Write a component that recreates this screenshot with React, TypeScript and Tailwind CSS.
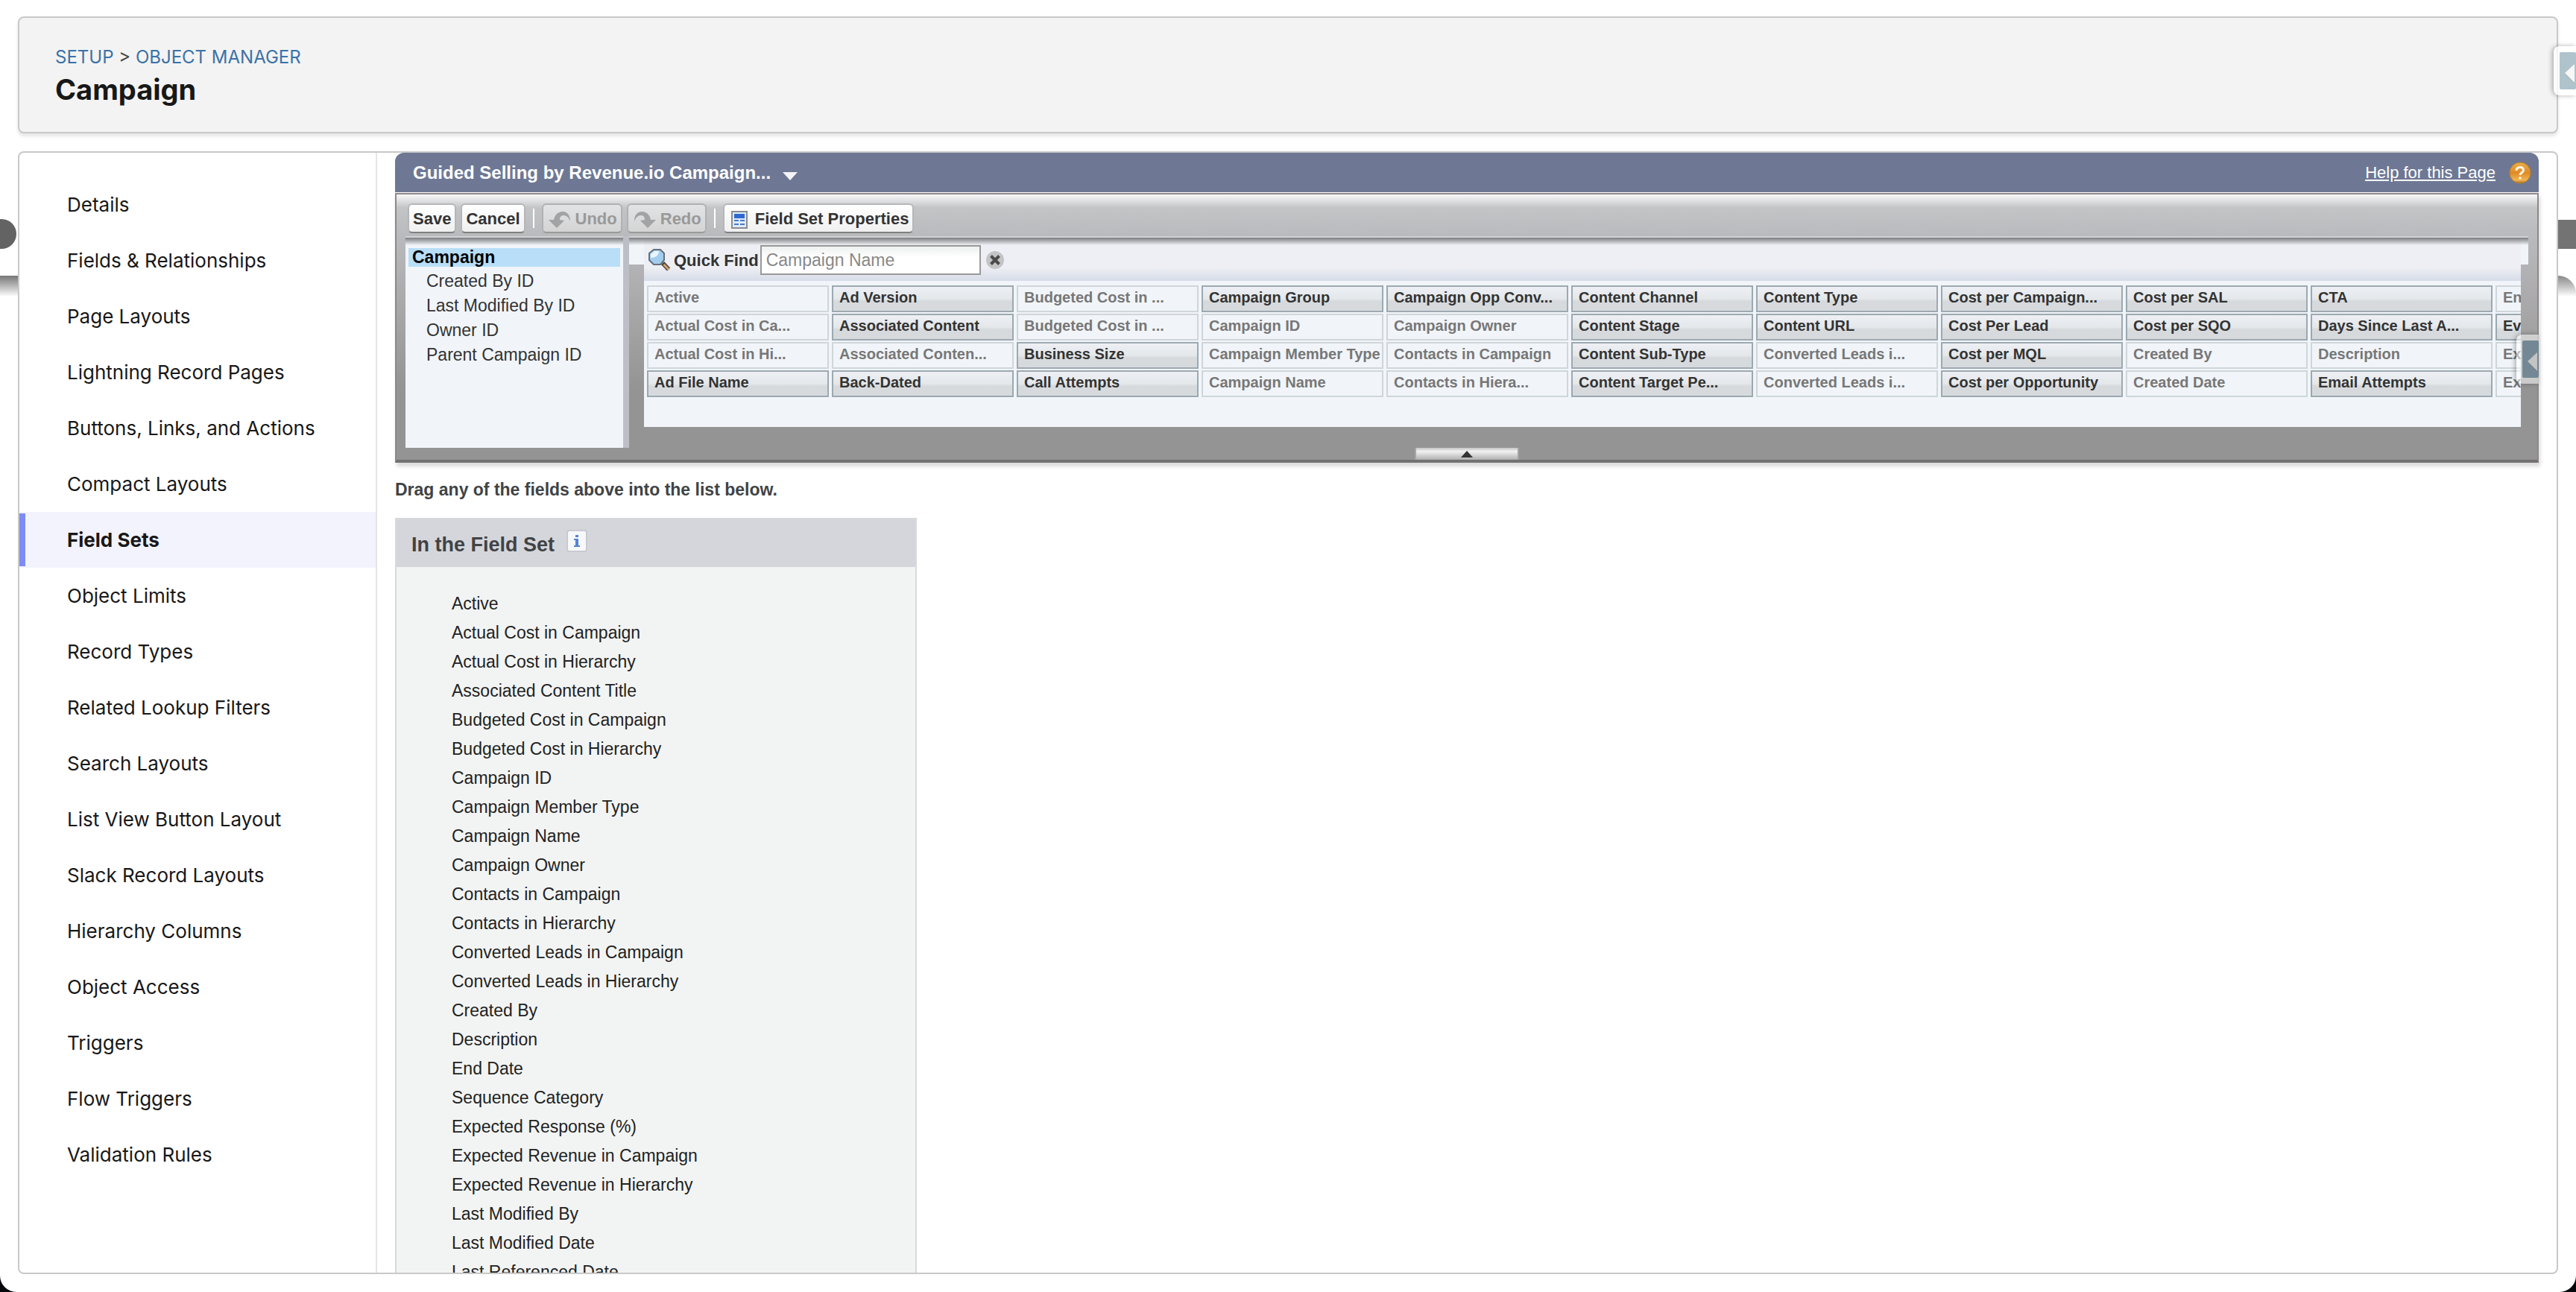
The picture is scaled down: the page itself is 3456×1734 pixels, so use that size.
import React from "react";

const NAV = [
  "Details",
  "Fields & Relationships",
  "Page Layouts",
  "Lightning Record Pages",
  "Buttons, Links, and Actions",
  "Compact Layouts",
  "Field Sets",
  "Object Limits",
  "Record Types",
  "Related Lookup Filters",
  "Search Layouts",
  "List View Button Layout",
  "Slack Record Layouts",
  "Hierarchy Columns",
  "Object Access",
  "Triggers",
  "Flow Triggers",
  "Validation Rules",
];

const TREE = ["Created By ID", "Last Modified By ID", "Owner ID", "Parent Campaign ID"];

type Cell = [label: string, used: boolean];

const COLUMNS: Cell[][] = [
  [["Active", true], ["Actual Cost in Ca...", true], ["Actual Cost in Hi...", true], ["Ad File Name", false]],
  [["Ad Version", false], ["Associated Content", false], ["Associated Conten...", true], ["Back-Dated", false]],
  [["Budgeted Cost in ...", true], ["Budgeted Cost in ...", true], ["Business Size", false], ["Call Attempts", false]],
  [["Campaign Group", false], ["Campaign ID", true], ["Campaign Member Type", true], ["Campaign Name", true]],
  [["Campaign Opp Conv...", false], ["Campaign Owner", true], ["Contacts in Campaign", true], ["Contacts in Hiera...", true]],
  [["Content Channel", false], ["Content Stage", false], ["Content Sub-Type", false], ["Content Target Pe...", false]],
  [["Content Type", false], ["Content URL", false], ["Converted Leads i...", true], ["Converted Leads i...", true]],
  [["Cost per Campaign...", false], ["Cost Per Lead", false], ["Cost per MQL", false], ["Cost per Opportunity", false]],
  [["Cost per SAL", false], ["Cost per SQO", false], ["Created By", true], ["Created Date", true]],
  [["CTA", false], ["Days Since Last A...", false], ["Description", true], ["Email Attempts", false]],
  [["End Date", true], ["Event Date", false], ["Expected Respon...", true], ["Expected Reven...", true]],
];

const FIELDS = [
  "Active",
  "Actual Cost in Campaign",
  "Actual Cost in Hierarchy",
  "Associated Content Title",
  "Budgeted Cost in Campaign",
  "Budgeted Cost in Hierarchy",
  "Campaign ID",
  "Campaign Member Type",
  "Campaign Name",
  "Campaign Owner",
  "Contacts in Campaign",
  "Contacts in Hierarchy",
  "Converted Leads in Campaign",
  "Converted Leads in Hierarchy",
  "Created By",
  "Description",
  "End Date",
  "Sequence Category",
  "Expected Response (%)",
  "Expected Revenue in Campaign",
  "Expected Revenue in Hierarchy",
  "Last Modified By",
  "Last Modified Date",
  "Last Referenced Date",
];

function TurnArrow({ flip = false }: { flip?: boolean }) {
  return (
    <svg
      viewBox="0 0 30 24"
      className={flip ? "mt-1 ml-[2px] h-6 w-[30px] -scale-x-100" : "mt-1 ml-[2px] h-6 w-[30px]"}
      aria-hidden="true"
    >
      <path d="M29 14C29 6 25 1 19 1C12 1 8 6 7 12H0L11 23L21 13L15 12C15 8 17 6 20 6C24 6 27 9 29 14Z" fill="#a2a3a5" />
    </svg>
  );
}

function SheetIcon() {
  return (
    <svg viewBox="0 0 22 24" className="h-6 w-[22px]" aria-hidden="true">
      <rect x="1" y="1" width="20" height="22" fill="#dcebfa" stroke="#8b8d90" strokeWidth="2" />
      <rect x="4" y="4" width="14" height="6" fill="#2f69cf" />
      <path d="M4 12h6v2H4zM12 12h6v2h-6zM4 17h6v2H4zM12 17h6v2h-6z" fill="#4a79c8" />
    </svg>
  );
}

function Magnifier() {
  return (
    <svg viewBox="0 0 32 32" className="size-8" aria-hidden="true">
      <path d="M20 20l8 8.500" stroke="#55483e" strokeWidth="6" />
      <path d="M21.500 22l7 7" stroke="#d3a878" strokeWidth="2.500" />
      <path d="M8 2h9l5 5v9l-5 6H8l-6-6V7z" fill="#a3cdee" stroke="#65717c" strokeWidth="2" />
      <path d="M4 13V8l5-4h6c0 5-4 9-11 9z" fill="#e9f5fd" />
    </svg>
  );
}

function ClearIcon() {
  return (
    <svg viewBox="0 0 24 24" className="size-6" aria-hidden="true">
      <circle cx="12" cy="12" r="12" fill="#c3c4c6" />
      <path d="M6.500 6.500l11 11M17.500 6.500l-11 11" stroke="#4a4a4a" strokeWidth="4" />
    </svg>
  );
}

function HelpIcon() {
  return (
    <svg viewBox="0 0 30 30" className="size-[30px]" aria-hidden="true">
      <defs>
        <linearGradient id="helpFill" x1="0" y1="0" x2="0" y2="1">
          <stop offset="0" stopColor="#eab04e" />
          <stop offset="0.5" stopColor="#df8a26" />
          <stop offset="0.85" stopColor="#efb552" />
          <stop offset="1" stopColor="#a8681c" />
        </linearGradient>
      </defs>
      <circle cx="15" cy="15" r="14" fill="url(#helpFill)" stroke="#c07f22" />
      <path
        d="M10 12c0-3 2-4.500 5-4.500s4.500 1.500 4.500 4c0 3-4.500 3-4.500 6.500"
        fill="none"
        stroke="#fdf3df"
        strokeWidth="3"
      />
      <rect x="13.500" y="20.500" width="3" height="3" fill="#fdf3df" />
    </svg>
  );
}

function SideTab({ dim = false }: { dim?: boolean }) {
  return (
    <button
      type="button"
      aria-label="Expand panel"
      className={
        dim
          ? "flex h-[66px] w-[30px] items-center justify-end rounded-l-lg bg-white/50 shadow-[-2px_0_6px_rgba(0,0,0,0.3)]"
          : "flex h-[66px] w-[30px] items-center justify-end rounded-l-lg bg-white/80 shadow-[-2px_0_6px_rgba(0,0,0,0.3)]"
      }
    >
      <svg viewBox="0 0 22 50" className="h-[50px] w-[22px]" aria-hidden="true">
        <rect width="22" height="50" rx="2" fill={dim ? "#738894" : "#afc3cc"} />
        <path d="M20 17v25L7 29z" fill="#000" opacity="0.12" />
        <path d="M20 16v25L7 28z" fill={dim ? "#c4c4c4" : "#f7f7f7"} />
      </svg>
    </button>
  );
}

const BTN =
  "flex h-10 items-center whitespace-nowrap rounded-md border-2 border-[#b5b6b8] border-b-[#7f7f7f] bg-linear-to-b from-white to-[#f0f0f0] px-[5px] text-[22px] font-bold text-[#333]";
const BTN_OFF =
  "flex h-10 items-center gap-[6px] whitespace-nowrap rounded-md border-2 border-[#b0b1b3] border-b-[#999] bg-linear-to-b from-[#e2e3e4] to-[#d4d4d5] px-[5px] text-[22px] font-bold text-[#999]";

function Toolbar() {
  return (
    <div className="flex h-14 items-center gap-[6px] pt-3 pb-1 pl-[15px]">
      <button type="button" className={BTN}>Save</button>
      <button type="button" className={BTN}>Cancel</button>
      <span className="mx-1 h-[26px] w-[2px] bg-white" />
      <button type="button" disabled className={BTN_OFF}>
        <TurnArrow />
        Undo
      </button>
      <button type="button" disabled className={BTN_OFF}>
        <TurnArrow flip />
        Redo
      </button>
      <span className="mx-1 h-[26px] w-[2px] bg-white" />
      <button type="button" className={BTN}>
        <span className="mt-1 mr-[10px] ml-1 flex">
          <SheetIcon />
        </span>
        Field Set Properties
      </button>
    </div>
  );
}

function Palette() {
  return (
    <div className="relative min-w-0 flex-1 pr-3">
      <div className="absolute top-0 right-3 left-0 h-[38px] bg-[#f1f5f9]" />
      <div className="absolute top-0 right-3 left-0 z-10 h-3 border-t-2 border-[#d0d1d3] bg-linear-to-b from-[#7c7d80] to-transparent" />
      <div className="relative mr-[10px] ml-5 overflow-hidden bg-[#f1f5f9]">
        <div className="flex h-[60px] items-center bg-linear-to-b from-[#eeeff4] from-70% to-[#d6dce9] pt-3 pb-2 pl-[5px]">
          <Magnifier />
          <label htmlFor="quick-find" className="ml-[3px] text-[22px] font-bold text-[#333]">
            Quick Find
          </label>
          <input
            id="quick-find"
            type="text"
            placeholder="Campaign Name"
            className="ml-[2px] h-10 w-[296px] border-2 border-[#999] bg-linear-to-b from-[#eef1f1] to-white to-40% px-[6px] text-[23px] text-[#333] placeholder:text-[#888]"
          />
          <button type="button" aria-label="Clear" className="ml-[7px]">
            <ClearIcon />
          </button>
        </div>
        <div className="flex h-[196px] gap-1 px-1 pt-[6px]">
          {COLUMNS.map((column, c) => (
            <div key={c} className="flex w-[244px] shrink-0 flex-col gap-[2px]">
              {column.map(([label, used], r) => (
                <div
                  key={r}
                  className={
                    used
                      ? "h-9 border-2 border-[#cfd6da] pl-2 text-[20px]/[28px] font-bold whitespace-nowrap text-[#777]"
                      : "h-9 border-2 border-[#9ca9b0] bg-linear-to-b from-[#edeff4] from-0% via-[#e4e8ea] via-50% to-[#d7dadd] to-60% pl-2 text-[20px]/[28px] font-bold whitespace-nowrap text-[#333]"
                  }
                >
                  {label}
                </div>
              ))}
            </div>
          ))}
        </div>
      </div>
      <div className="absolute top-[132px] -right-[2px] z-20">
        <SideTab dim />
      </div>
    </div>
  );
}

function Editor() {
  return (
    <section>
      <header className="flex h-[53px] items-center rounded-t-xl bg-[#6e7894] pr-[10px] pl-6 text-white">
        <h2 className="text-[24px] font-bold">Guided Selling by Revenue.io Campaign...</h2>
        <button type="button" aria-label="Choose field set" className="mt-[10px] ml-4">
          <svg viewBox="0 0 20 11" className="h-[11px] w-5" aria-hidden="true">
            <path d="M0 0h20L10 11z" fill="#f4f4f6" />
          </svg>
        </button>
        <a href="#help" className="ml-auto text-[22px] underline">Help for this Page</a>
        <a href="#help" aria-label="Help" className="ml-[18px]">
          <HelpIcon />
        </a>
      </header>
      <div className="relative mt-px border-2 border-b-4 border-[#8f888a] border-b-[#737171] bg-[linear-gradient(to_bottom,#f8f8f9_0px,#c3c4c6_18px,#b9babd_56px,#b0b0b2_110px,#949494_260px)] shadow-[2px_5px_5px_rgba(0,0,0,0.15)]">
        <Toolbar />
        <div className="flex h-[300px] pl-3">
          <div className="h-[284px] w-[292px] shrink-0 bg-[#f1f5f9] text-[23px]/[33px]">
            <div className="h-3 border-t-2 border-[#d0d1d3] bg-linear-to-b from-[#7c7d80] to-[#f1f5f9]" />
            <div className="mx-1 mt-1 h-[25px] bg-[#b8def8] pl-[5px] text-[23px]/[25px] font-bold text-black">
              Campaign
            </div>
            <ul className="mt-[3px]">
              {TREE.map((item) => (
                <li key={item} className="pl-7 text-[#333]">{item}</li>
              ))}
            </ul>
          </div>
          <div className="h-[284px] w-2 shrink-0 bg-[#bdbfc6]" />
          <Palette />
        </div>
        <button
          type="button"
          aria-label="Collapse palette"
          className="absolute bottom-0 left-1/2 flex h-4 w-[140px] -translate-x-1/2 items-center justify-center border-x-2 border-[#a5a5a5] bg-linear-to-b from-[#c4c4c4] via-[#f2f2f2] via-30% to-[#b0b0b0]"
        >
          <svg viewBox="0 0 16 9" className="h-[9px] w-4" aria-hidden="true">
            <path d="M8 0l8 9H0z" fill="#333" />
          </svg>
        </button>
      </div>
    </section>
  );
}

function FieldSet() {
  return (
    <section className="mt-6 w-[700px] border-2 border-[#d4dadc] bg-[#f2f4f3]">
      <header className="flex h-16 items-center gap-4 bg-[#d5d6db] pl-5">
        <h3 className="pt-1 text-[27px] font-bold text-[#404345]">In the Field Set</h3>
        <span className="mb-[6px] flex h-[30px] w-7 items-center justify-center rounded-sm border-2 border-[#c9cacd] bg-[#f6f8fb]">
          <svg viewBox="0 0 8 16" className="h-4 w-2" aria-label="Information">
            <path d="M2 0h4v3H2zM0 5h6v9h2v2H0v-2h2V7H0z" fill="#5583d6" />
          </svg>
        </span>
      </header>
      <ul className="pt-[30px] pb-10 pl-[74px] text-[23px]/[39px] text-[#222]">
        {FIELDS.map((field) => (
          <li key={field}>{field}</li>
        ))}
      </ul>
    </section>
  );
}

export default function App() {
  return (
    <div className="h-screen bg-[#05070c]">
      <div className="relative flex h-full flex-col gap-6 overflow-hidden rounded-b-[22px] bg-white px-6 pt-[22px] pb-6 font-['Liberation_Sans',Arial,sans-serif]">
        <div className="absolute top-[294px] left-0 size-10 -translate-x-[18px] rounded-full bg-[#636363]" />
        <div className="absolute top-[370px] left-0 h-7 w-6 bg-linear-to-b from-[#777] to-white" />
        <div className="absolute top-[295px] right-0 h-[39px] w-6 bg-[#737373]" />
        <div className="absolute top-[370px] right-0 h-7 w-6 rounded-tr-3xl bg-linear-to-b from-[#888] to-white" />

        <header className="relative h-[157px] shrink-0 rounded-lg border-2 border-[#c9c9c9] bg-[#f3f3f3] pt-9 pl-12 font-['Inter',sans-serif] shadow-[0_4px_4px_rgba(0,0,0,0.1)]">
          <nav className="text-[24px]/[34px] text-[#444]">
            <a href="#setup" className="text-[#3a72a8]">SETUP</a>
            {" > "}
            <a href="#objects" className="text-[#3a72a8]">OBJECT MANAGER</a>
          </nav>
          <h1 className="text-[38px]/[52px] font-bold text-[#181818]">Campaign</h1>
        </header>

        <div className="relative flex min-h-0 flex-1 overflow-hidden rounded-lg border-2 border-[#c9c9c9] bg-white">
          <nav className="w-[480px] shrink-0 border-r-2 border-[#e5e5e5] pt-8 font-['Inter',sans-serif] text-[26px]/[75px] text-[#181818]">
            {NAV.map((item) =>
              item === "Field Sets" ? (
                <a
                  key={item}
                  href="#nav"
                  aria-current="page"
                  className="flex h-[75px] items-center bg-[#f3f3fe] font-bold"
                >
                  <span className="h-[71px] w-2 bg-[#7f8cf5]" />
                  <span className="pl-14">{item}</span>
                </a>
              ) : (
                <a key={item} href="#nav" className="block h-[75px] pl-16">{item}</a>
              ),
            )}
          </nav>
          <main className="min-w-0 flex-1 px-6">
            <Editor />
            <p className="mt-[22px] text-[23px]/[28px] font-bold text-[#404345]">
              Drag any of the fields above into the list below.
            </p>
            <FieldSet />
          </main>
        </div>

        <div className="absolute top-[62px] right-0">
          <SideTab />
        </div>
      </div>
    </div>
  );
}
